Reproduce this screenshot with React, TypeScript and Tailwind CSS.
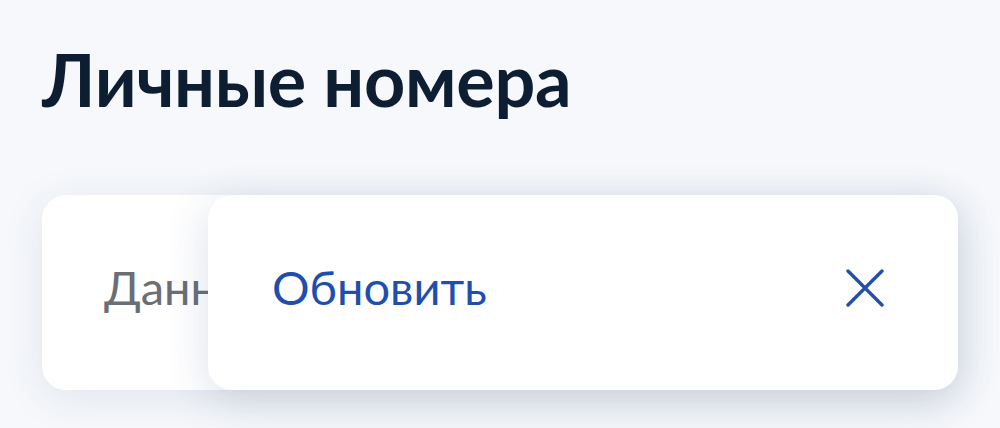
import React from 'react';

const CloseIcon = () => (
  <svg width="38" height="38" viewBox="0 0 38 38" fill="none" className="shrink-0">
    <path d="M2 2L36 36M36 2L2 36" stroke="#2350a8" strokeWidth="3.4" strokeLinecap="round" />
  </svg>
);

const NumbersPage = () => {
  return (
    <div
      className="min-h-screen w-full bg-[#f6f8fb] px-[42px] pt-[38px]"
      style={{ fontFamily: 'Lato, "Noto Sans", sans-serif' }}
    >
      <h1 className="text-[72px] font-bold leading-[82px] text-[#0d1e32] tracking-[-0.3px]">Личные номера</h1>

      <div className="relative mt-[75px] h-[195px]">
        {/* underlying row, partly covered by the action panel */}
        <div className="flex h-full items-center rounded-[24px] bg-white pb-[10px] pl-[62px] shadow-[0_8px_40px_rgba(40,60,110,0.10)]">
          <div className="w-[104px] overflow-hidden">
            <span className="text-[47px] text-[#6a6f77] whitespace-nowrap">Данные обновлены</span>
          </div>
        </div>

        {/* swipe action panel */}
        <div className="absolute inset-y-0 left-[166px] right-0 flex items-center justify-between rounded-[24px] bg-white pb-[10px] pl-[64px] pr-[74px] shadow-[0_10px_44px_rgba(40,60,110,0.16)]">
          <span className="text-[47px] text-[#1f4fae]">Обновить</span>
          <CloseIcon />
        </div>
      </div>
    </div>
  );
};

export default function App() {
  return <NumbersPage />;
}
